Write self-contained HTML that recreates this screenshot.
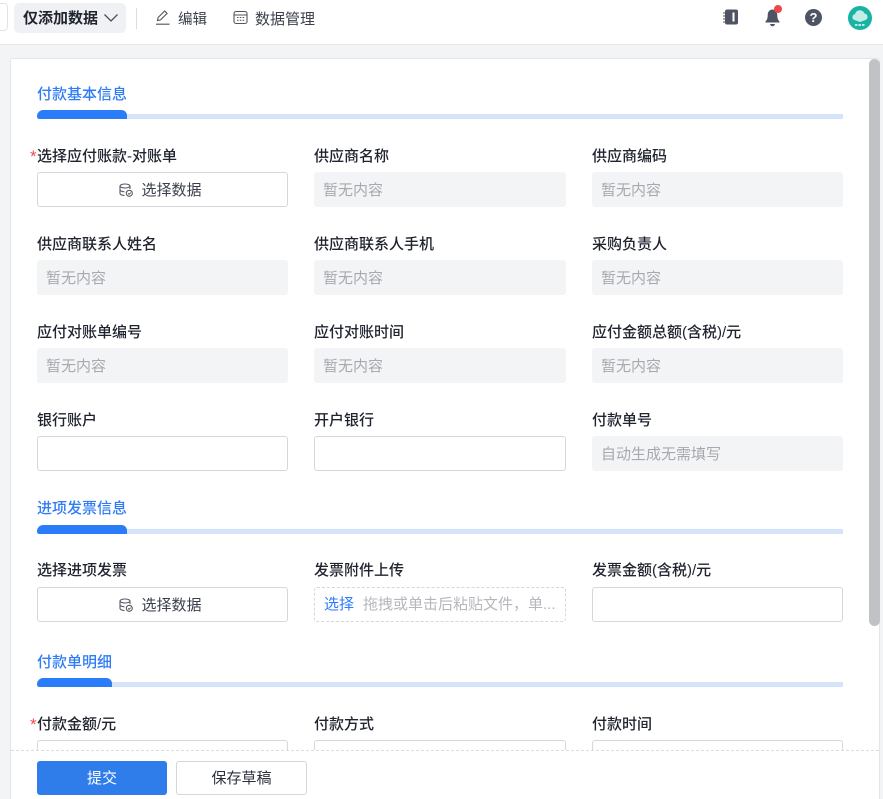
<!DOCTYPE html>
<html lang="zh"><head><meta charset="utf-8"><style>
*{box-sizing:border-box}
html,body{margin:0;padding:0}
body{width:883px;height:799px;position:relative;overflow:hidden;background:#f3f4f6;font-family:"Liberation Sans","Noto Sans CJK SC",sans-serif;color:#1f2533;font-size:15px}
.a{position:absolute;white-space:nowrap}
.top{left:0;top:0;width:883px;height:45px;background:#fff;border-bottom:1px solid #e6e7ea}
.card{left:10px;top:58px;width:870px;height:741px;background:#fff;border:1px solid #e4e5e8;border-bottom:0;border-radius:3px 3px 0 0}
.h{font-size:15px;font-weight:500;color:#2f7cf6;line-height:20px;left:37px}
.bar{left:37px;width:806px;height:5px;background:#d6e4fb}
.pill{left:37px;height:9px;background:#2b7cf8;border-radius:9px 8px 0 4px}
.l{font-size:15px;font-weight:500;line-height:20px;color:#20242f}
.st{color:#f5484a;font-size:17px;left:30px;line-height:20px}
.f{height:35px;border-radius:3px}
.d{background:#f3f4f6;color:#a6a9af;font-size:15px;line-height:38px;padding-left:9px}
.i{background:#fff;border:1px solid #d5d7db}
.b{background:#fff;border:1px solid #d5d7db;line-height:36px;font-size:15px;color:#3a3f4b}
.c1{left:37px;width:251px}.c2{left:314px;width:252px}.c3{left:592px;width:251px}
</style></head><body>
<div class="a top"></div>
<div class="a" style="left:-6px;top:3px;width:14px;height:28px;border:1px solid #e2e3e6;border-radius:4px;background:#fff"></div>
<div class="a" style="left:14px;top:3px;width:112px;height:30px;background:#f0f1f4;border-radius:5px"></div>
<div class="a" style="left:23px;top:9px;font-size:15px;font-weight:700;line-height:20px;color:#20242f">仅添加数据</div>
<svg class="a" style="left:103px;top:13px" width="16" height="10" viewBox="0 0 16 10"><path d="M1.500 1.500L8 8l6.500-6.500" fill="none" stroke="#4a4f5c" stroke-width="1.300"/></svg>
<div class="a" style="left:136px;top:8px;width:1px;height:21px;background:#dcdde0"></div>
<svg class="a" style="left:155px;top:9px" width="16" height="17" viewBox="0 0 16 17"><path d="M2.500 11.500l.6-3L9.700 2l2.400 2.400-6.600 6.500zM1 15.200h13.500" fill="none" stroke="#50545f" stroke-width="1.100"/></svg>
<div class="a" style="left:178px;top:10px;line-height:20px;font-size:14.500px;color:#3a3f4b">编辑</div>
<svg class="a" style="left:233px;top:10px" width="15" height="15" viewBox="0 0 15 15"><rect x="1" y="1.500" width="13" height="12" rx="2" fill="none" stroke="#50545f" stroke-width="1.100"/><path d="M1 5h13" stroke="#50545f"/><path d="M4 7.500h1.500M6.800 7.500h1.500M9.600 7.500h1.500M4 10.300h1.500M6.800 10.300h1.500M9.600 10.300h1.500" stroke="#50545f" stroke-width="1.100"/></svg>
<div class="a" style="left:255px;top:10px;line-height:20px;color:#3a3f4b">数据管理</div>

<svg class="a" style="left:722px;top:8px" width="18" height="18" viewBox="0 0 18 18"><path d="M3 3.500a2 2 0 0 1 2-2h9a2 2 0 0 1 2 2v11a2 2 0 0 1-2 2H5a2 2 0 0 1-2-2z" fill="#4e5463"/><path d="M1 5h3M1 8h3M1 11h3M1 14h3" stroke="#4e5463" stroke-width="1"/><rect x="10.500" y="4.500" width="2" height="9" fill="#fff"/></svg>
<svg class="a" style="left:764px;top:8px" width="17" height="19" viewBox="0 0 17 19"><path d="M8.500 1.500c3.300 0 4.800 2.700 4.800 5.500 0 3.300.7 5 2.200 6.500v1H1.500v-1C3 12 3.700 10.300 3.700 7c0-2.800 1.500-5.500 4.800-5.500z" fill="#4e5463"/><path d="M6 16h5c-.3 1.600-1.300 2.300-2.500 2.300S6.300 17.600 6 16z" fill="#4e5463"/></svg>
<div class="a" style="left:774px;top:5px;width:8px;height:8px;border-radius:50%;background:#f0484a"></div>
<div class="a" style="left:805px;top:9px;width:17px;height:17px;border-radius:50%;background:#4e5463;color:#fff;font-size:13px;font-weight:700;line-height:17px;text-align:center">?</div>
<svg class="a" style="left:848px;top:6px" width="24" height="24" viewBox="0 0 24 24"><circle cx="12" cy="12" r="12" fill="#17b3a3"/><path d="M6.500 14a3 3 0 0 1 .4-5.800A5 5 0 0 1 16.500 7.500 3.400 3.400 0 0 1 17.500 14l-5.500 2z" fill="#c5ede8"/><path d="M7 19h10" stroke="#bfeae4" stroke-width="2" stroke-dasharray="2.500 1"/></svg>

<div class="a card"></div>
<div class="a" style="left:869px;top:59px;width:11px;height:567px;background:#c1c2c6;border-radius:5.500px"></div>

<div class="a h" style="top:85px">付款基本信息</div>
<div class="a bar" style="top:114px"></div><div class="a pill" style="top:110px;width:90px"></div>

<div class="a st" style="top:147px">*</div>
<div class="a l c1" style="top:147px">选择应付账款-对账单</div>
<div class="a l c2" style="top:147px">供应商名称</div>
<div class="a l c3" style="top:147px">供应商编码</div>
<div class="a f b c1" style="top:172px;text-align:center;padding-right:4px"><svg style="vertical-align:-2px;margin-right:8px" width="14" height="14" viewBox="0 0 14 14"><ellipse cx="6" cy="3" rx="5" ry="2" fill="none" stroke="#555a65" stroke-width="1.100"/><path d="M1 3v7.500c0 1 2 2 4.500 2M11 3v3M1 6.800c0 1 2 2 4.500 2" fill="none" stroke="#555a65" stroke-width="1.100"/><circle cx="10.300" cy="10.300" r="3" fill="none" stroke="#555a65" stroke-width="1.100"/><path d="M9 10.300l1 1 1.700-1.700" fill="none" stroke="#555a65"/></svg>选择数据</div>
<div class="a f d c2" style="top:172px">暂无内容</div>
<div class="a f d c3" style="top:172px">暂无内容</div>

<div class="a l c1" style="top:235px">供应商联系人姓名</div>
<div class="a l c2" style="top:235px">供应商联系人手机</div>
<div class="a l c3" style="top:235px">采购负责人</div>
<div class="a f d c1" style="top:260px">暂无内容</div>
<div class="a f d c2" style="top:260px">暂无内容</div>
<div class="a f d c3" style="top:260px">暂无内容</div>

<div class="a l c1" style="top:323px">应付对账单编号</div>
<div class="a l c2" style="top:323px">应付对账时间</div>
<div class="a l c3" style="top:323px">应付金额总额(含税)/元</div>
<div class="a f d c1" style="top:348px">暂无内容</div>
<div class="a f d c2" style="top:348px">暂无内容</div>
<div class="a f d c3" style="top:348px">暂无内容</div>

<div class="a l c1" style="top:411px">银行账户</div>
<div class="a l c2" style="top:411px">开户银行</div>
<div class="a l c3" style="top:411px">付款单号</div>
<div class="a f i c1" style="top:436px"></div>
<div class="a f i c2" style="top:436px"></div>
<div class="a f d c3" style="top:436px">自动生成无需填写</div>

<div class="a h" style="top:499px">进项发票信息</div>
<div class="a bar" style="top:529px"></div><div class="a pill" style="top:525px;width:90px"></div>

<div class="a l c1" style="top:561px">选择进项发票</div>
<div class="a l c2" style="top:561px">发票附件上传</div>
<div class="a l c3" style="top:561px">发票金额(含税)/元</div>
<div class="a f b c1" style="top:587px;text-align:center;padding-right:4px"><svg style="vertical-align:-2px;margin-right:8px" width="14" height="14" viewBox="0 0 14 14"><ellipse cx="6" cy="3" rx="5" ry="2" fill="none" stroke="#555a65" stroke-width="1.100"/><path d="M1 3v7.500c0 1 2 2 4.500 2M11 3v3M1 6.800c0 1 2 2 4.500 2" fill="none" stroke="#555a65" stroke-width="1.100"/><circle cx="10.300" cy="10.300" r="3" fill="none" stroke="#555a65" stroke-width="1.100"/><path d="M9 10.300l1 1 1.700-1.700" fill="none" stroke="#555a65"/></svg>选择数据</div>
<div class="a f c2" style="top:587px;border:1px dashed #d5d7db;line-height:34px;padding-left:9px;color:#b5b7bc"><span style="color:#2f7cf6;margin-right:9px">选择</span>拖拽或单击后粘贴文件，单...</div>
<div class="a f i c3" style="top:587px"></div>

<div class="a h" style="top:653px">付款单明细</div>
<div class="a bar" style="top:682px"></div><div class="a pill" style="top:678px;width:75px"></div>

<div class="a st" style="top:715px">*</div>
<div class="a l c1" style="top:715px">付款金额/元</div>
<div class="a l c2" style="top:715px">付款方式</div>
<div class="a l c3" style="top:715px">付款时间</div>
<div class="a f i c1" style="top:740px"></div>
<div class="a f i c2" style="top:740px"></div>
<div class="a f i c3" style="top:740px"></div>

<div class="a" style="left:11px;top:750px;width:868px;height:49px;background:#fff;border-top:1px dashed #dcdde0"></div>
<div class="a" style="left:37px;top:761px;width:130px;height:34px;background:#2f7deb;border-radius:3px;color:#fff;text-align:center;line-height:36px">提交</div>
<div class="a" style="left:176px;top:761px;width:131px;height:34px;background:#fff;border:1px solid #d5d7db;border-radius:3px;text-align:center;line-height:34px;color:#2c303b">保存草稿</div>
</body></html>
